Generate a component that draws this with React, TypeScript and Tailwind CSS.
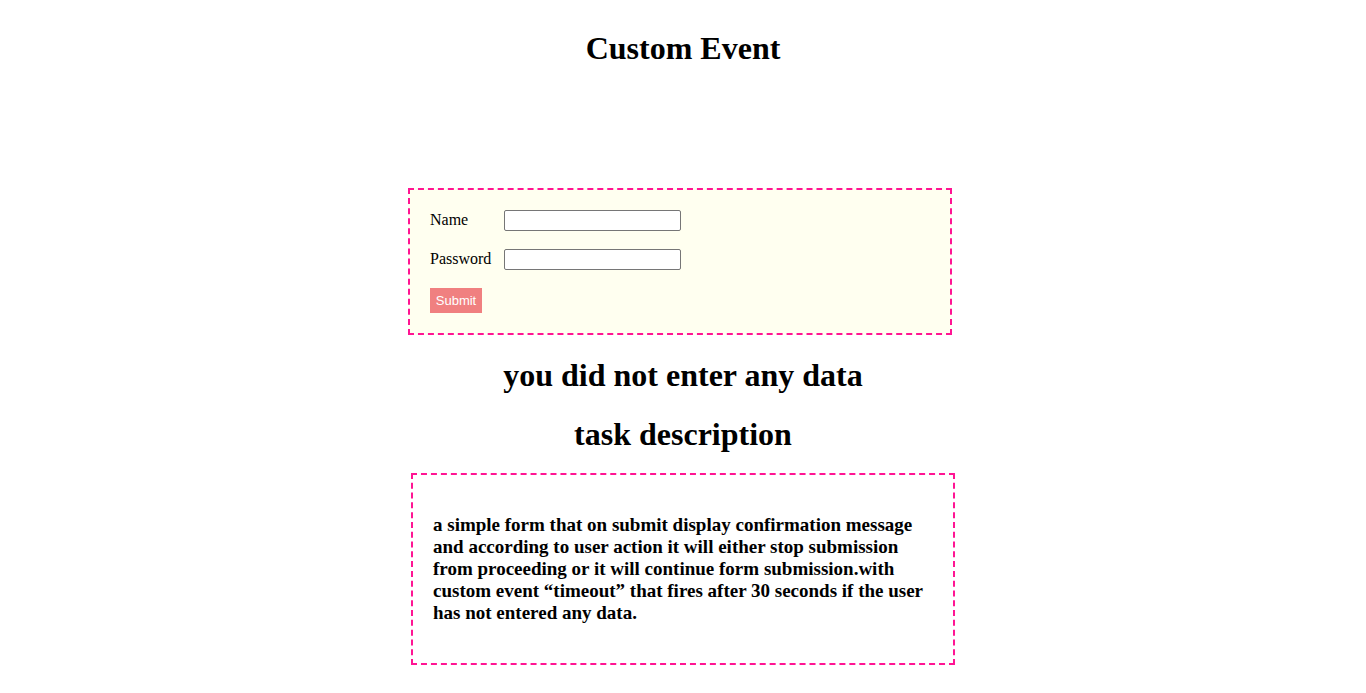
import type { InputHTMLAttributes } from "react";

type FieldProps = InputHTMLAttributes<HTMLInputElement> & { id: string; label: string };

function Field({ id, label, ...rest }: FieldProps) {
  return (
    <div className="flex items-start">
      <label htmlFor={id} className="w-[74px] leading-5">
        {label}
      </label>
      <input
        id={id}
        {...rest}
        className="h-[21px] w-[177px] rounded-[2px] border border-[#767676] bg-white px-[2px] font-['Liberation_Sans',Arial,sans-serif] text-[13px]"
      />
    </div>
  );
}

export default function App() {
  return (
    <main className="flex flex-col items-center bg-white px-2 pt-[30px] font-['Liberation_Serif','Times_New_Roman',serif] text-base text-black">
      <h1 className="text-[32px] leading-[37px] font-bold">Custom Event</h1>

      <form
        onSubmit={(event) => event.preventDefault()}
        className="mt-[121px] mr-[6px] flex w-full max-w-[544px] flex-col items-start gap-[18px] border-2 border-dashed border-[#ff1493] bg-[#fffff0] p-5"
      >
        <Field id="name" label="Name" type="text" />
        <Field id="password" label="Password" type="password" />
        <button
          type="submit"
          className="min-w-[52px] bg-[#f08080] p-[5px] font-['Liberation_Sans',Arial,sans-serif] text-[13px] leading-[15px] text-white"
        >
          Submit
        </button>
      </form>

      <h1 className="mt-[22px] text-[32px] leading-[37px] font-bold">you did not enter any data</h1>
      <h1 className="mt-[22px] text-[32px] leading-[37px] font-bold">task description</h1>

      <section className="mt-5 w-full max-w-[544px] border-2 border-dashed border-[#ff1493] px-5 py-[39px]">
        <h3 className="text-[19px] leading-[22px] font-bold">
          a simple form that on submit display confirmation message and according to user action it
          will either stop submission from proceeding or it will continue form submission.with custom
          event “timeout” that fires after 30 seconds if the user has not entered any data.
        </h3>
      </section>
    </main>
  );
}
